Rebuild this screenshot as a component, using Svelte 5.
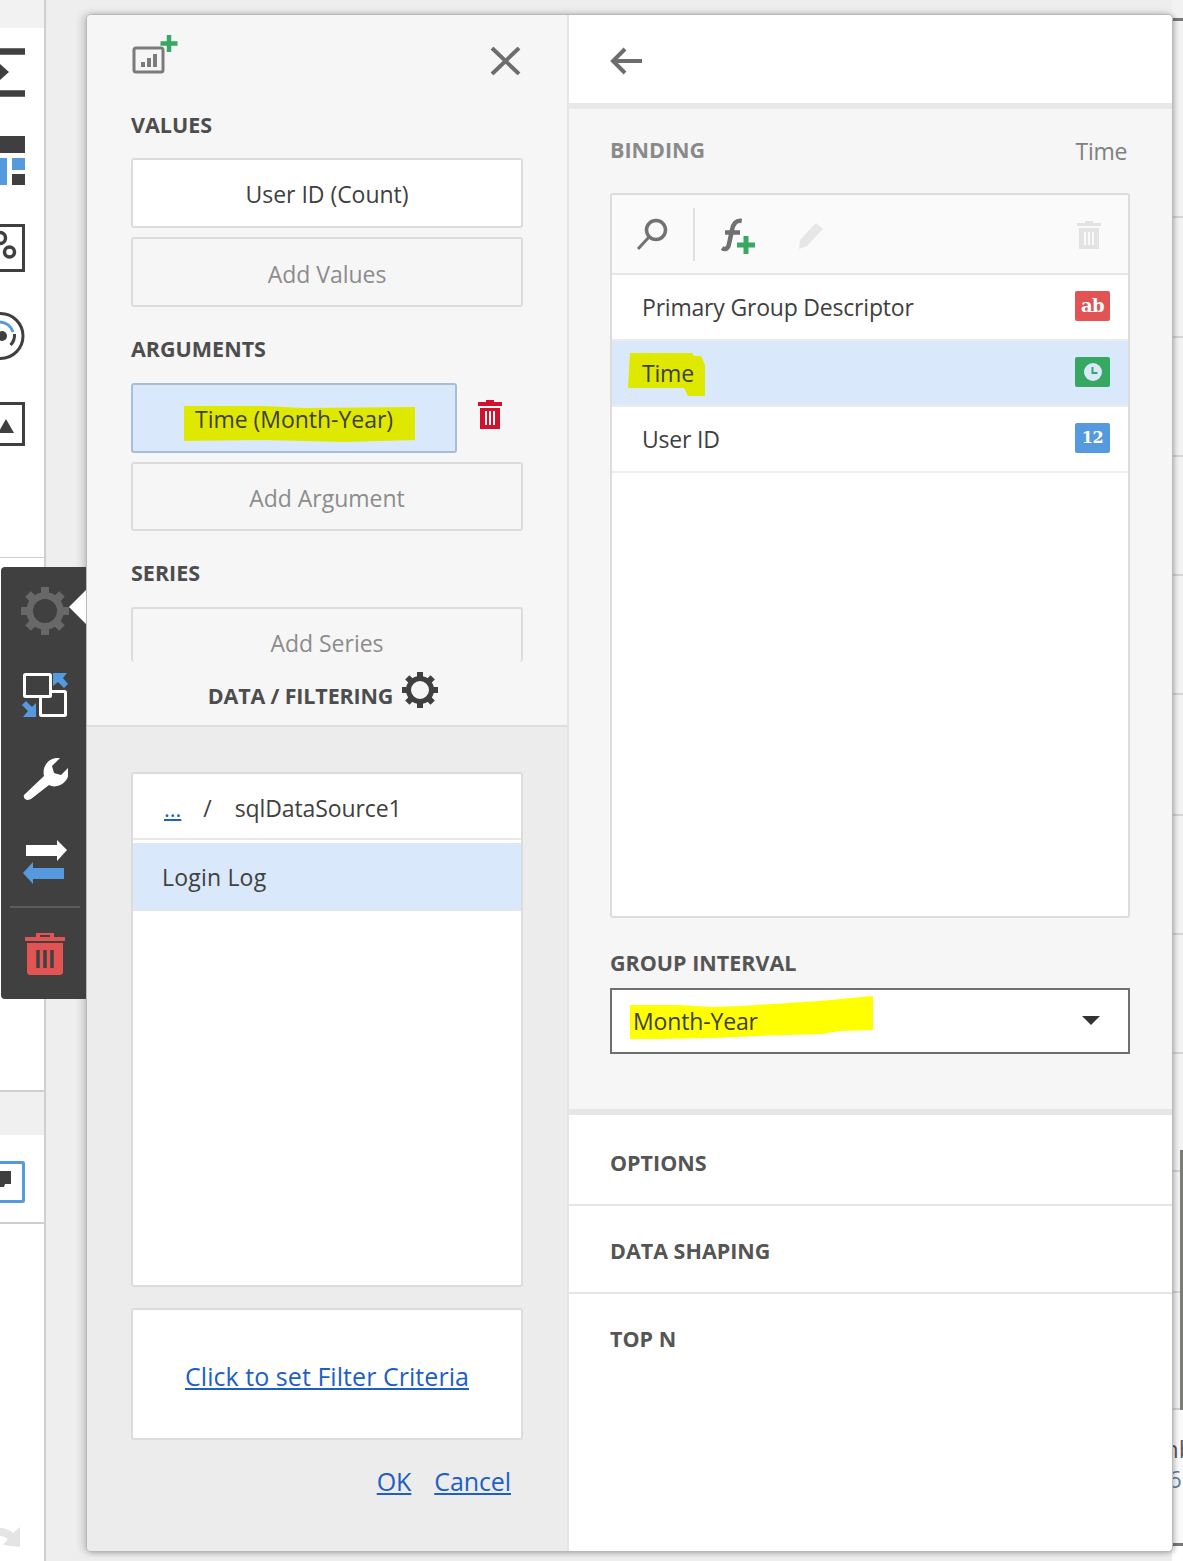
<script>
  const rows = [
    { label: 'Primary Group Descriptor', kind: 'ab', text: 'ab' },
    { label: 'Time', kind: 'time', active: true },
    { label: 'User ID', kind: 'num', text: '12' }
  ];
  const stripRows = [197, 120, 119, 119, 119, 121, 119, 119, 118, 121, 117];
</script>

<div class="screen">
  <aside class="rail">
    <div class="rail-top"></div>
    <div class="rail-icons">
      <svg class="ri" viewBox="0 0 45 88"><path d="M0 23.500h25M0 65.500h25" stroke="#3f3f3f" stroke-width="6.500"/><path d="M0 36l9 8-9 8z" fill="#3f3f3f"/></svg>
      <svg class="ri" viewBox="0 0 45 88"><rect x="0" y="20" width="25" height="17" fill="#3f3f3f"/><rect x="0" y="42" width="7" height="27" fill="#559adf"/><rect x="12" y="42" width="13" height="12" fill="#559adf"/><rect x="12" y="58" width="13" height="11" fill="#3f3f3f"/></svg>
      <svg class="ri" viewBox="0 0 45 88"><rect x="-8" y="21.500" width="31.500" height="45" fill="none" stroke="#3f3f3f" stroke-width="3"/><circle cx="0" cy="34" r="5.500" fill="none" stroke="#3f3f3f" stroke-width="3.500"/><circle cx="9.500" cy="48" r="5" fill="none" stroke="#3f3f3f" stroke-width="3.500"/></svg>
      <svg class="ri" viewBox="0 0 45 88"><circle cx="0.500" cy="44" r="22.500" fill="none" stroke="#3f3f3f" stroke-width="3"/><path d="M0 30a14 14 0 0 1 13 10" fill="none" stroke="#559adf" stroke-width="3"/><path d="M14.500 42a14 14 0 0 1-4 11" fill="none" stroke="#3f3f3f" stroke-width="3"/><circle cx="2" cy="44" r="5" fill="#3f3f3f"/></svg>
      <svg class="ri" viewBox="0 0 45 88"><rect x="-8" y="23.500" width="31.500" height="41" fill="none" stroke="#3f3f3f" stroke-width="3"/><path d="M6 39l8 14H-2z" fill="#3f3f3f"/></svg>
    </div>
    <div class="rail-band"></div>
    <div class="rail-wide">
      <svg width="25" height="42" viewBox="0 0 25 42"><rect x="-6" y="1.500" width="29.500" height="39" rx="1" fill="none" stroke="#559adf" stroke-width="3"/><path d="M0 10h11v13H5l-1 3H0z" fill="#3f3f3f"/></svg>
    </div>
    <svg class="rail-arrow" viewBox="0 0 21 20"><path d="M0 1c5 0 10 2 13 5l7-6v20L3 18l5-6C5 10 3 9 0 9z" fill="#e4e4e4"/></svg>
  </aside>

  <div class="strip">
    <div class="strip-lines">
      <div class="strip-top"></div>
      {#each stripRows as h}
        <div class="strip-row" style="height: {h}px"></div>
      {/each}
    </div>
    <div class="strip-foot">
      <span class="sn">nb</span>
      <span class="sd">6</span>
    </div>
    <div class="strip-end"></div>
  </div>
  <div class="strip-bar"></div>

  <div class="dialog">
    <section class="left">
      <div class="left-top">
        <div class="dlg-head">
          <svg class="chart" width="46" height="40" viewBox="0 0 46 40">
            <rect x="2" y="13" width="29" height="24" rx="2" fill="none" stroke="#7b7b7b" stroke-width="3"/>
            <rect x="9" y="27" width="4" height="5" fill="#7b7b7b"/><rect x="15" y="23" width="4" height="9" fill="#7b7b7b"/><rect x="21" y="19" width="4" height="13" fill="#7b7b7b"/>
            <path d="M37 0v17M28.500 8.500h17" stroke="#36a862" stroke-width="4.500"/>
          </svg>
          <svg class="close" width="31" height="28" viewBox="0 0 31 28"><path d="M2 1l27 26M29 1L2 27" stroke="#6d6d6d" stroke-width="4"/></svg>
        </div>
        <h3 class="cap c-values">VALUES</h3>
        <button class="slot filled">User ID (Count)</button>
        <button class="slot">Add Values</button>
        <h3 class="cap c-args">ARGUMENTS</h3>
        <div class="arg-row">
          <div class="slot selected">
            <svg class="hl" width="231" height="37" viewBox="0 0 231 37"><path d="M0 1h80l40 2 111-1v33l-70 2-80-2-81 1z" fill="#dfe900"/></svg>
            <span class="over">Time (Month-Year)</span>
          </div>
          <svg class="del" width="24" height="30" viewBox="0 0 24 30"><path d="M8 3V1h8v2h8v4H0V3zM2 9h20v21H2z" fill="#d2112c"/><path d="M8 12v14M12 12v14M16 12v14" stroke="#fff" stroke-width="2"/></svg>
        </div>
        <button class="slot add-arg">Add Argument</button>
        <h3 class="cap c-series">SERIES</h3>
        <div class="slot clipped">Add Series</div>
        <div class="filter-head">
          <span class="cap-inline">DATA / FILTERING</span>
          <svg width="36" height="36" viewBox="0 0 36 36" class="gear"><g fill="#404040"><path d="M15 0h6v7h-6zM15 29h6v7h-6zM0 15h7v6H0zM29 15h7v6h-7z"/><path d="M15 0h6v7h-6zM15 29h6v7h-6zM0 15h7v6H0zM29 15h7v6h-7z" transform="rotate(45 18 18)"/></g><circle cx="18" cy="18" r="11.500" fill="none" stroke="#404040" stroke-width="5"/></svg>
        </div>
      </div>
      <div class="left-bottom">
        <div class="tree">
          <div class="crumb"><a href="#top" class="dots">...</a><span class="sl">/</span><span class="src">sqlDataSource1</span></div>
          <div class="tree-item">Login Log</div>
        </div>
        <div class="criteria"><a href="#top">Click to set Filter Criteria</a></div>
        <div class="actions"><a href="#top">OK</a><a href="#top">Cancel</a></div>
      </div>
    </section>

    <section class="right">
      <div class="back">
        <svg width="32" height="28" viewBox="0 0 32 28"><path d="M15 2L3 14l12 12M3 14h29" fill="none" stroke="#6d6d6d" stroke-width="4"/></svg>
      </div>
      <div class="binding">
        <div class="bind-head"><h3 class="cap muted">BINDING</h3><span class="bind-val">Time</span></div>
        <div class="fields">
          <div class="tools">
            <svg class="t1" width="32" height="32" viewBox="0 0 32 32"><circle cx="20" cy="12" r="9.500" fill="none" stroke="#737373" stroke-width="3.500"/><path d="M13 19L2 31" stroke="#737373" stroke-width="3"/></svg>
            <div class="tsep"></div>
            <svg class="fx" width="36" height="38" viewBox="0 0 36 38"><path d="M20.700 3C15 2 12 6 11 12L8 26C7 31 4 32 1 30M4 14.500h15" fill="none" stroke="#707070" stroke-width="4.500"/><path d="M25 18v18M16 27h18" stroke="#36a862" stroke-width="5"/></svg>
            <svg class="pen" width="26" height="28" viewBox="0 0 26 28"><path d="M18 1l7 6L9 24l-8 3 1-9z" fill="#e6e6e6"/></svg>
            <svg class="bin" width="24" height="30" viewBox="0 0 24 30"><path d="M8 3V1h8v2h8v3H0V3zM2 8h20v21H2z" fill="#e3e3e3"/><path d="M8 12v13M12 12v13M16 12v13" stroke="#fafafa" stroke-width="2"/></svg>
          </div>
          {#each rows as r}
            <div class="frow" class:active={r.active}>
              {#if r.active}
                <svg class="hl2" width="77" height="43" viewBox="0 0 77 43"><path d="M2 0h62l2 3h7l4 9v31H60l-4-8H0z" fill="#dfe900"/></svg>
              {/if}
              <span class="over">{r.label}</span>
              <span class="badge {r.kind}">
                {#if r.kind === 'time'}
                  <svg width="18" height="18" viewBox="0 0 18 18"><circle cx="9" cy="9" r="9" fill="#d9e8fb"/><path d="M8.500 4v6h5" fill="none" stroke="#36a862" stroke-width="2"/></svg>
                {:else}
                  {r.text}
                {/if}
              </span>
            </div>
          {/each}
        </div>
        <h3 class="cap muted2 c-group">GROUP INTERVAL</h3>
        <div class="select">
          <svg class="hl3" width="243" height="46" viewBox="0 0 243 46"><path d="M0 9h51l30 2 30-1 33-2 45-3 54-5v34l-33 1-18 3-34 1-30 1-46 2-53 1-29 0z" fill="#ffff00"/></svg>
          <span class="over">Month-Year</span>
          <svg class="caret" width="18" height="9" viewBox="0 0 18 9"><path d="M0 0h18L9 9z" fill="#333"/></svg>
        </div>
      </div>
      <div class="acc first"><h3 class="cap muted2">OPTIONS</h3></div>
      <div class="acc"><h3 class="cap muted2">DATA SHAPING</h3></div>
      <div class="acc last"><h3 class="cap muted2">TOP N</h3></div>
    </section>
  </div>

  <div class="toolbar">
    <span class="notch"></span>
    <svg width="48" height="48" viewBox="0 0 36 36" class="tb-gear"><g fill="#686868"><path d="M15 0h6v7h-6zM15 29h6v7h-6zM0 15h7v6H0zM29 15h7v6h-7z"/><path d="M15 0h6v7h-6zM15 29h6v7h-6zM0 15h7v6H0zM29 15h7v6h-7z" transform="rotate(45 18 18)"/></g><circle cx="18" cy="18" r="11.500" fill="none" stroke="#686868" stroke-width="5"/></svg>
    <svg width="46" height="46" viewBox="0 0 46 46" class="tb-i tb-first"><rect x="18.500" y="19.500" width="25" height="24" rx="1" fill="none" stroke="#fff" stroke-width="3"/><rect x="2.500" y="2.500" width="26" height="22" rx="1" fill="#404040" stroke="#fff" stroke-width="3"/><path d="M31 1h14l-4 5 5 6-4 4-6-6-5 4z M14 45V31l-4 4-6-6-4 4 6 6-5 6z" fill="#559adf"/></svg>
    <svg width="46" height="46" viewBox="0 0 46 46" class="tb-i"><path d="M6 44c-3 0-5-3-4-5l20-19c-2-8 3-17 12-18l4 0-8 8 2 7 7 2 8-8c1 9-3 17-12 19-3 1-6 0-8-1L9 43z" fill="#fff"/></svg>
    <svg width="46" height="46" viewBox="0 0 46 46" class="tb-i"><path d="M4 5h31V0l10 10-10 11v-5H4z" fill="#fff"/><path d="M42 28H11v-6L1 33l10 11v-5h31z" fill="#559adf"/></svg>
    <div class="tb-sep"></div>
    <svg width="40" height="44" viewBox="0 0 40 44" class="tb-del"><path d="M11 5V1h18v4h11v4H0V5zM15 5h10V3H15zM2 11h36v30l-2 2H4l-2-2z" fill="#e25454" fill-rule="evenodd"/><path d="M13 18v18M20 18v18M27 18v18" stroke="#404040" stroke-width="3.500"/></svg>
  </div>
</div>

<style>
  :global(body) { margin: 0; background: #fff; }
  * { box-sizing: border-box; }
  .screen {
    position: relative; width: 1183px; height: 1561px; overflow: hidden; background: #eee;
    font-family: "Open Sans", "Noto Sans", sans-serif; color: #404040;
  }
  h3 { margin: 0; }
  a { color: #1d5fc4; }

  /* background page */
  .rail {
    position: absolute; left: 0; top: 0; bottom: 0; width: 46px; background: #fff;
    border-right: 2px solid #cfcfcf; display: flex; flex-direction: column;
  }
  .rail-top { height: 28px; background: #f2f2f2; flex: none; }
  .rail-icons { height: 530px; display: flex; flex-direction: column; border-bottom: 1px solid #cfcfcf; flex: none; }
  .ri { width: 45px; height: 88px; display: block; flex: none; }
  .rail-band { margin-top: 532px; height: 45px; background: #f0f0f0; border-top: 2px solid #cfcfcf; flex: none; }
  .rail-wide { height: 89px; padding-top: 26px; border-bottom: 2px solid #cfcfcf; flex: none; }
  .rail-wide svg { display: block; }
  .rail-arrow { position: absolute; left: 0; top: 1527px; width: 21px; height: 20px; }

  .strip {
    position: absolute; left: 1172px; top: 0; width: 11px; height: 1561px; overflow: hidden;
    display: flex; flex-direction: column;
  }
  .strip-lines { background: #f2f2f2; flex: none; }
  .strip-top { height: 21px; border-bottom: 3px solid #777; }
  .strip-row { border-bottom: 2px solid #d4d4d4; }
  .strip-foot { flex: 1; background: #f9f9f9; display: flex; flex-direction: column; font-size: 24px; line-height: 30px; padding-top: 24px; }
  .sn { color: #5a5a5a; margin-left: -8px; white-space: nowrap; }
  .sd { color: #5f7f9c; margin-left: -4px; }
  .strip-end { height: 18px; border-top: 3px solid #777; background: #fff; flex: none; }
  .strip-bar { position: absolute; right: 0; top: 1150px; width: 3px; height: 260px; background: #7c7c76; }

  /* dialog */
  .dialog {
    position: absolute; left: 86px; top: 14px; width: 1087px; height: 1538px;
    display: flex; border: 1px solid #b9b9b9; border-radius: 5px; background: #fff; overflow: hidden;
    box-shadow: -3px 0 8px rgba(0,0,0,.18), 2px 1px 5px rgba(0,0,0,.2);
  }
  .left { width: 482px; flex: none; border-right: 2px solid #e5e5e5; display: flex; flex-direction: column; }
  .left-top { height: 712px; background: #f6f6f6; padding: 0 44px; border-bottom: 2px solid #dedede; flex: none; }
  .left-bottom { flex: 1; background: #ececec; padding: 45px 44px 0; }
  .dlg-head { height: 72px; display: flex; justify-content: space-between; align-items: flex-start; padding-top: 20px; }
  .chart { margin-left: 1px; }
  .close { margin-top: 12px; margin-right: 2px; }
  .cap { font-size: 21.500px; font-weight: 700; line-height: 28px; color: #4d4d4d; letter-spacing: 0; }
  .c-values { margin-top: 24px; margin-bottom: 19px; }
  .c-args { margin-top: 28px; margin-bottom: 20px; }
  .c-series { margin-top: 28px; margin-bottom: 20px; }
  .slot {
    position: relative; display: flex; align-items: center; justify-content: center; width: 392px; height: 70px;
    background: transparent; border: 2px solid #dcdcdc; border-radius: 3px; padding: 3px 0 0;
    font: inherit; font-size: 23px; letter-spacing: -.03px; color: #8c8c8c; margin: 0 0 9px;
  }
  .slot.filled { background: #fff; color: #404040; padding-top: 1px; }
  .slot.selected { width: 326px; background: #d9e8fb; border-color: #a9bdd4; color: #404040; margin: 0; padding-top: 1px; }
  .add-arg { margin-top: 9px; height: 69px; }
  .arg-row { display: flex; align-items: center; gap: 21px; }
  .del { margin-top: -8px; }
  .hl { position: absolute; left: 51px; top: 20px; }
  .over { position: relative; }
  .clipped { height: 55px; border-bottom: 0; margin: 14px 0 0; padding: 0 0 3px; align-items: flex-end; }
  .filter-head { display: flex; justify-content: center; align-items: center; gap: 9px; height: 50px; margin-top: 5px; padding-right: 8px; }
  .cap-inline { font-size: 21.500px; font-weight: 700; color: #4d4d4d; letter-spacing: -.15px; padding-top: 6px; }
  .gear { margin-bottom: -1px; margin-top: -5px; }

  .tree { width: 392px; height: 515px; border: 2px solid #dcdcdc; border-radius: 3px; background: #fff; }
  .crumb { height: 66px; display: flex; align-items: center; padding: 4px 0 0 31px; font-size: 23px; letter-spacing: -.1px; border-bottom: 2px solid #e8e8e8; }
  .dots { font-size: 22px; letter-spacing: 0; }
  .sl { margin: 0 23px 0 22px; }
  .tree-item { margin-top: 3px; height: 68px; background: #d9e8fb; display: flex; align-items: center; padding-left: 29px; font-size: 23px; letter-spacing: .2px; border-bottom: 1px solid #e4e7ea; }
  .criteria { margin-top: 21px; width: 392px; height: 132px; border: 2px solid #dcdcdc; border-radius: 3px; background: #fff; display: flex; align-items: center; justify-content: center; padding-top: 4px; font-size: 25px; letter-spacing: .05px; }
  .actions { margin-top: 24px; display: flex; justify-content: flex-end; gap: 23px; padding-right: 12px; font-size: 25px; letter-spacing: -.1px; }

  .right { flex: 1; display: flex; flex-direction: column; background: #fff; min-width: 0; }
  .back { height: 88px; padding: 32px 0 0 41px; flex: none; }
  .back svg { display: block; }
  .binding { height: 1012px; background: #f6f6f6; border-top: 6px solid #e8e8e8; border-bottom: 6px solid #e6e6e6; padding: 0 41px; flex: none; }
  .bind-head { height: 84px; display: flex; justify-content: space-between; align-items: flex-start; padding: 27px 4px 0 0; }
  .muted { color: #8a8a8a; }
  .muted2 { color: #555; }
  .bind-val { font-size: 23px; color: #808080; line-height: 30px; letter-spacing: -.3px; }
  .fields { width: 520px; height: 725px; border: 2px solid #dcdcdc; border-radius: 3px; background: #fff; }
  .tools { height: 80px; background: #fafafa; border-bottom: 2px solid #e6e6e6; display: flex; align-items: center; padding-left: 24px; position: relative; }
  .tsep { width: 2px; height: 53px; background: #e0e0e0; margin: 0 26px 0 25px; }
  .fx { margin-top: 5px; flex: none; }
  .pen { margin-left: 41px; margin-top: 3px; flex: none; }
  .bin { position: absolute; right: 27px; top: 25px; }
  .frow { position: relative; height: 66px; display: flex; align-items: center; padding: 0 18px 0 30px; justify-content: space-between; font-size: 23px; letter-spacing: -.2px; border-bottom: 2px solid #ececec; }
  .frow.active { background: #d9e8fb; }
  .hl2 { position: absolute; left: 16px; top: 12px; }
  .badge { width: 35px; height: 30px; border-radius: 2px; display: flex; align-items: center; justify-content: center; color: #fff; font: 700 18px/1 "DejaVu Serif", "Liberation Serif", serif; letter-spacing: -.5px; margin-top: -2px; }
  .badge.ab { background: #e25454; }
  .badge.time { background: #36a862; }
  .badge.num { background: #559adf; font-size: 16px; }
  .c-group { margin-top: 31px; margin-bottom: 11px; }
  .select { position: relative; width: 520px; height: 66px; background: #fff; border: 2px solid #6f6f6f; display: flex; align-items: center; padding-left: 21px; font-size: 23px; letter-spacing: -.15px; }
  .hl3 { position: absolute; left: 18px; top: 6px; }
  .caret { position: absolute; right: 28px; top: 26px; }
  .acc { height: 91px; padding: 34px 0 0 41px; border-bottom: 2px solid #e6e6e6; flex: none; }
  .acc + .acc { height: 88px; padding-top: 31px; }
  .acc.last { border-bottom: 0; }

  /* floating toolbar */
  .toolbar {
    position: absolute; left: 1px; top: 567px; width: 85px; height: 432px;
    background: #404040; border-radius: 4px 0 0 4px; display: flex; flex-direction: column; align-items: center;
    padding-left: 3px;
  }
  .notch { position: absolute; right: 0; top: 23px; width: 0; height: 0; border: 17px solid transparent; border-right-color: #fff; border-left: 0; }
  .tb-gear { margin-top: 20px; flex: none; }
  .tb-i { margin-top: 38px; flex: none; }
  .tb-first { margin-top: 37px; }
  .tb-sep { width: 70px; height: 2px; background: #5c5c5c; margin-top: 20px; flex: none; }
  .tb-del { margin-top: 24px; flex: none; }
</style>
